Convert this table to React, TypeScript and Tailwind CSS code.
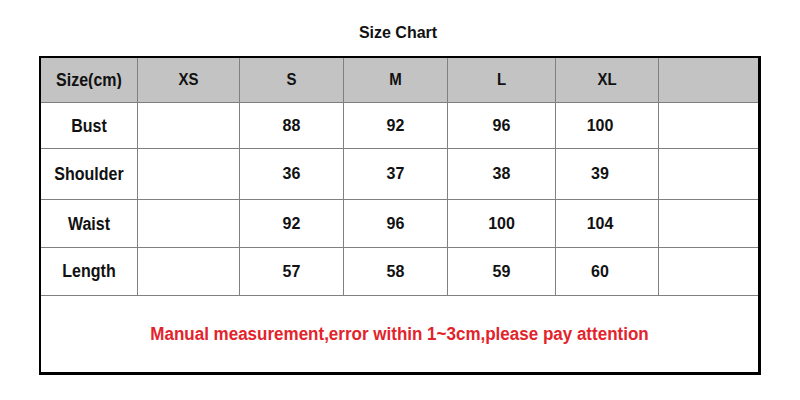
import React from "react";

const cols = ["XS", "S", "M", "L", "XL", ""];
const rows: { label: string; values: string[] }[] = [
  { label: "Bust", values: ["", "88", "92", "96", "100", ""] },
  { label: "Shoulder", values: ["", "36", "37", "38", "39", ""] },
  { label: "Waist", values: ["", "92", "96", "100", "104", ""] },
  { label: "Length", values: ["", "57", "58", "59", "60", ""] },
];

const cellBase = "flex items-center justify-center border-b border-[#808080]";

export default function App() {
  return (
    <div
      className="w-[800px] h-[400px] bg-white text-[#111111]"
      style={{ fontFamily: '"Liberation Sans", Arial, sans-serif' }}
    >
      <div className="pt-[23px] h-[56px] flex justify-center">
        <div className="text-[16px] leading-[20px] font-bold mr-[4px]">Size Chart</div>
      </div>
      <div className="ml-[39px] w-[722px] border-t-2 border-l-2 border-r-[3px] border-b-[3px] border-black">
        <div className="grid grid-cols-[97px_102px_104px_104px_108px_103px_99px] grid-rows-[45px_46px_51px_48px_48px]">
          <div className={`${cellBase} border-r bg-[#c3c3c3] text-[16px] font-bold`}>
            <span className="inline-block scale-y-110">Size(cm)</span>
          </div>
          {cols.map((c, i) => (
            <div
              key={i}
              className={`${cellBase} bg-[#c3c3c3] text-[15px] font-bold ${i < cols.length - 1 ? "border-r" : ""}`}
            >
              <span className="inline-block scale-y-110">{c}</span>
            </div>
          ))}
          {rows.map((r) => (
            <React.Fragment key={r.label}>
              <div className={`${cellBase} border-r text-[16px] font-bold`}>
                <span className="inline-block scale-y-110">{r.label}</span>
              </div>
              {r.values.map((v, i) => (
                <div
                  key={i}
                  className={`${cellBase} text-[16px] font-bold ${i < r.values.length - 1 ? "border-r" : ""} ${i === 4 ? "pr-[14px]" : ""}`}
                >
                  {v}
                </div>
              ))}
            </React.Fragment>
          ))}
        </div>
        <div className="h-[76px] flex items-center justify-center">
          <span className="inline-block scale-y-110 text-[17px] font-bold text-[#e3232b]">
            Manual measurement,error within 1~3cm,please pay attention
          </span>
        </div>
      </div>
    </div>
  );
}
